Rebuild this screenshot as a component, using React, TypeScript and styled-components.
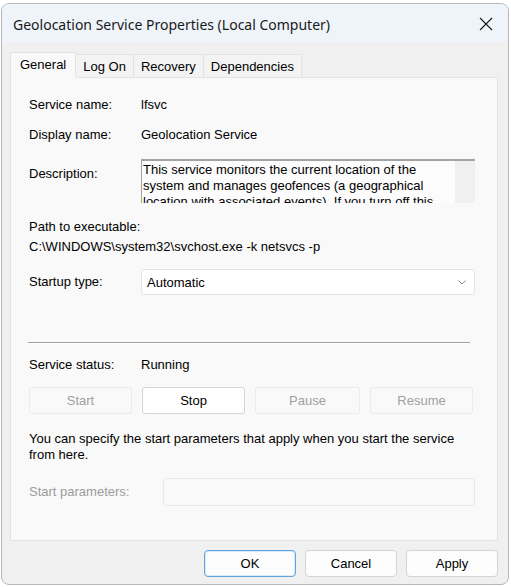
import React from "react";
import styled, { createGlobalStyle } from "styled-components";

const Global = createGlobalStyle`
  html, body { margin: 0; padding: 0; background: #ffffff; }
  * { box-sizing: border-box; }
`;

const Window = styled.div`
  margin: 3px 0 0 1px;
  width: 508px;
  height: 582px;
  border: 1px solid #b8b8b8;
  border-radius: 8px;
  background: #f0f0f0;
  overflow: hidden;
  display: flex;
  flex-direction: column;
  font-family: "Liberation Sans", Arial, sans-serif;
  font-size: 13px;
  color: #000;
`;

const TitleBar = styled.div`
  height: 38px;
  flex: none;
  background: #eef4f9;
  display: flex;
  align-items: center;
  justify-content: space-between;
  padding: 0 15px 0 11px;
`;

const Title = styled.div`
  font-family: "Noto Sans", "Segoe UI", sans-serif;
  font-size: 14px;
  color: #1a1a1a;
  margin-top: 2px;
`;

const CloseIcon = styled.svg`
  width: 14px;
  height: 14px;
  display: block;
  margin-top: 2px;
`;

const Body = styled.div`
  flex: 1;
  display: flex;
  flex-direction: column;
  padding: 10px 10px 0 8px;
`;

const TabStrip = styled.div`
  display: flex;
  align-items: flex-end;
  height: 25px;
  position: relative;
  z-index: 1;
`;

const Tab = styled.div<{ $active?: boolean }>`
  height: ${(p) => (p.$active ? "26px" : "23px")};
  padding: 0 ${(p) => (p.$active ? "9px" : "7px")};
  display: flex;
  align-items: ${(p) => (p.$active ? "flex-start" : "center")};
  padding-top: ${(p) => (p.$active ? "4px" : "0")};
  background: ${(p) => (p.$active ? "#f9f9f9" : "#f3f3f3")};
  border: 1px solid #e3e3e3;
  border-bottom: ${(p) => (p.$active ? "1px solid #f9f9f9" : "none")};
  margin-bottom: ${(p) => (p.$active ? "-1px" : "0")};
  margin-left: ${(p) => (p.$active ? "0" : "-1px")};
  font-size: 13px;
  color: #000;
  white-space: nowrap;
`;

const Panel = styled.div`
  width: 488px;
  height: 464px;
  background: #f9f9f9;
  border: 1px solid #e3e3e3;
  padding: 17px 22px 0 18px;
  display: flex;
  flex-direction: column;
`;

const FieldRow = styled.div<{ $top: number; $h?: number; $label?: number }>`
  display: grid;
  grid-template-columns: ${(p) => p.$label ?? 112}px 1fr;
  align-items: center;
  margin-top: ${(p) => p.$top}px;
  min-height: ${(p) => p.$h ?? 20}px;
`;

const Label = styled.div<{ $disabled?: boolean; $alignTop?: number }>`
  color: ${(p) => (p.$disabled ? "#9c9c9c" : "#000")};
  align-self: ${(p) => (p.$alignTop !== undefined ? "start" : "center")};
  padding-top: ${(p) => p.$alignTop ?? 0}px;
  line-height: 16px;
`;

const Value = styled.div`
  line-height: 16px;
`;

const DescBox = styled.div`
  height: 44px;
  background: #fcfcfc;
  border-top: 2px solid #a3a3a3;
  border-left: 1px solid #a3a3a3;
  display: flex;
  overflow: hidden;
`;

const DescText = styled.div`
  flex: 1;
  padding: 1px 0 0 1px;
  line-height: 16px;
  overflow: hidden;
`;

const ScrollTrack = styled.div`
  width: 20px;
  background: #f0f0f0;
`;

const Block = styled.div<{ $top: number }>`
  margin-top: ${(p) => p.$top}px;
  line-height: 20px;
`;

const Combo = styled.div`
  height: 26px;
  background: #ffffff;
  border: 1px solid #e2e2e2;
  border-radius: 3px;
  display: flex;
  align-items: center;
  justify-content: space-between;
  padding: 0 8px 0 5px;
`;

const Chevron = styled.svg`
  width: 8px;
  height: 5px;
  display: block;
`;

const Separator = styled.div`
  margin-top: 47px;
  width: 442px;
  margin-left: -1px;
  border-top: 1px solid #a0a0a0;
  border-bottom: 1px solid #ffffff;
`;

const ButtonRow = styled.div`
  margin-top: 12px;
  display: grid;
  grid-template-columns: 103px 103px 105px 103px;
  column-gap: 10px;
`;

const ActionButton = styled.div<{ $disabled?: boolean }>`
  height: 27px;
  display: flex;
  align-items: center;
  justify-content: center;
  border-radius: 3px;
  background: ${(p) => (p.$disabled ? "#f9f9f9" : "#ffffff")};
  border: 1px solid ${(p) => (p.$disabled ? "#ebebeb" : "#d4d4d4")};
  color: ${(p) => (p.$disabled ? "#a0a0a0" : "#000")};
`;

const Para = styled.div`
  margin-top: 17px;
  line-height: 16px;
`;

const ParamInput = styled.div`
  height: 28px;
  background: #f9f9f9;
  border: 1px solid #e9e9e9;
  border-radius: 3px;
`;

const Footer = styled.div`
  display: flex;
  justify-content: flex-end;
  gap: 9px;
  padding: 9px 0 0 0;
`;

const DialogButton = styled.div<{ $primary?: boolean }>`
  width: 92px;
  height: 27px;
  display: flex;
  align-items: center;
  justify-content: center;
  border-radius: 4px;
  background: #fdfdfd;
  border: 1px solid ${(p) => (p.$primary ? "#5ea3e2" : "#d4d4d4")};
  box-shadow: ${(p) => (p.$primary ? "inset 0 0 0 1px #dbeafb" : "none")};
  font-size: 13px;
`;

export default function App() {
  return (
    <>
      <Global />
      <Window>
        <TitleBar>
          <Title>Geolocation Service Properties (Local Computer)</Title>
          <CloseIcon viewBox="0 0 14 14">
            <path d="M1 1 L13 13 M13 1 L1 13" stroke="#1a1a1a" strokeWidth="1.1" fill="none" />
          </CloseIcon>
        </TitleBar>
        <Body>
          <TabStrip>
            <Tab $active>General</Tab>
            <Tab>Log On</Tab>
            <Tab>Recovery</Tab>
            <Tab>Dependencies</Tab>
          </TabStrip>
          <Panel>
            <FieldRow $top={0}>
              <Label>Service name:</Label>
              <Value>lfsvc</Value>
            </FieldRow>
            <FieldRow $top={10}>
              <Label>Display name:</Label>
              <Value>Geolocation Service</Value>
            </FieldRow>
            <FieldRow $top={14} $h={44}>
              <Label $alignTop={7}>Description:</Label>
              <DescBox>
                <DescText>
                  This service monitors the current location of the system and manages geofences (a geographical
                  location with associated events).  If you turn off this service, applications will be unable to use
                  or receive notifications for geolocation or geofences.
                </DescText>
                <ScrollTrack />
              </DescBox>
            </FieldRow>
            <Block $top={14}>
              Path to executable:
              <br />
              C:\WINDOWS\system32\svchost.exe -k netsvcs -p
            </Block>
            <FieldRow $top={12} $h={26}>
              <Label>Startup type:</Label>
              <Combo>
                <span>Automatic</span>
                <Chevron viewBox="0 0 8 5">
                  <path d="M0.5 0.5 L4 4 L7.5 0.5" stroke="#8a8a8a" strokeWidth="1" fill="none" />
                </Chevron>
              </Combo>
            </FieldRow>
            <Separator />
            <FieldRow $top={11}>
              <Label>Service status:</Label>
              <Value>Running</Value>
            </FieldRow>
            <ButtonRow>
              <ActionButton $disabled>Start</ActionButton>
              <ActionButton>Stop</ActionButton>
              <ActionButton $disabled>Pause</ActionButton>
              <ActionButton $disabled>Resume</ActionButton>
            </ButtonRow>
            <Para>
              You can specify the start parameters that apply when you start the service
              <br />
              from here.
            </Para>
            <FieldRow $top={15} $h={28} $label={134}>
              <Label $disabled>Start parameters:</Label>
              <ParamInput />
            </FieldRow>
          </Panel>
          <Footer>
            <DialogButton $primary>OK</DialogButton>
            <DialogButton>Cancel</DialogButton>
            <DialogButton>Apply</DialogButton>
          </Footer>
        </Body>
      </Window>
    </>
  );
}
